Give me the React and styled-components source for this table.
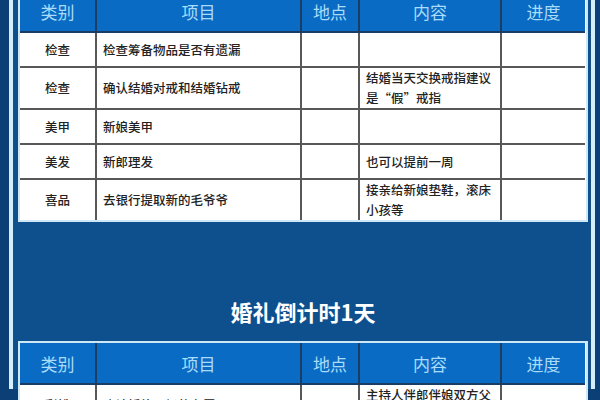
import React from "react";
import styled, { createGlobalStyle } from "styled-components";

const Global = createGlobalStyle`
  html, body { margin: 0; padding: 0; background: #0b3f75; }
  body { font-family: "Noto Sans CJK SC", "Noto Sans", sans-serif; }
`;

const Page = styled.div`
  width: 600px;
  height: 400px;
  overflow: hidden;
  background: #0b3f75;
  padding: 0 5px 0 9px;
  box-sizing: border-box;
`;

const Frame = styled.div`
  height: 100%;
  box-sizing: border-box;
  border-left: 4px solid #d4eefb;
  border-right: 4px solid #d4eefb;
  box-shadow: inset 1px 0 0 #1a4f86, inset -1px 0 0 #1a4f86;
  background: #0e508e;
  padding: 0 3px 0 5px;
`;

const Sheet = styled.div`
  margin-top: ${(p) => p.$top || 0}px;
  border: 2px solid #cfe8f8;
  background: #fff;
`;

const Table = styled.table`
  width: 565px;
  border-collapse: separate;
  border-spacing: 0;
  table-layout: fixed;
`;

const Head = styled.th`
  height: 40px;
  padding: 0;
  background: #0a6bc5;
  color: #a9dcf8;
  font-size: 17px;
  font-weight: 400;
  text-align: center;
  border-bottom: 2px solid #1c3d63;
  border-right: 2px solid #1c3d63;
  &:last-child { border-right: none; }
`;

const Cell = styled.td`
  height: 33px;
  padding: 0 ${(p) => (p.$center ? 0 : 6)}px;
  color: #222222;
  font-size: 12.5px;
  font-weight: 500;
  line-height: 20px;
  text-align: ${(p) => (p.$center ? "center" : "left")};
  vertical-align: middle;
  border-bottom: 2px solid #585858;
  border-right: 2px solid #585858;
  &:last-child { border-right: none; }
  tr:last-child > & { border-bottom: none; }
`;

const Title = styled.h2`
  margin: 74px 0 15px;
  height: 30px;
  line-height: 30px;
  text-align: center;
  color: #ffffff;
  font-size: 22px;
  font-weight: 700;
  font-family: "Noto Sans CJK SC", sans-serif;
`;

const widths = [77, 205, 58, 142, 83];
const heads = ["类别", "项目", "地点", "内容", "进度"];

const rows1 = [
  ["检查", "检查筹备物品是否有遗漏", "", "", ""],
  ["检查", "确认结婚对戒和结婚钻戒", "", "结婚当天交换戒指建议是“假”戒指", ""],
  ["美甲", "新娘美甲", "", "", ""],
  ["美发", "新郎理发", "", "也可以提前一周", ""],
  ["喜品", "去银行提取新的毛爷爷", "", "接亲给新娘垫鞋，滚床小孩等", ""],
];

const rows2 = [
  ["彩排", "确认婚礼现场的布置", "", "主持人伴郎伴娘双方父母参加", ""],
];

function Grid({ rows, top }) {
  return (
    <Sheet $top={top}>
      <Table>
        <colgroup>
          {widths.map((w, i) => (
            <col key={i} style={{ width: w }} />
          ))}
        </colgroup>
        <thead>
          <tr>
            {heads.map((h) => (
              <Head key={h}>{h}</Head>
            ))}
          </tr>
        </thead>
        <tbody>
          {rows.map((r, i) => (
            <tr key={i}>
              {r.map((c, j) => (
                <Cell key={j} $center={j === 0}>
                  {c}
                </Cell>
              ))}
            </tr>
          ))}
        </tbody>
      </Table>
    </Sheet>
  );
}

export default function App() {
  return (
    <Page>
      <Global />
      <Frame>
        <Grid rows={rows1} top={-11} />
        <Title>婚礼倒计时1天</Title>
        <Grid rows={rows2} top={0} />
      </Frame>
    </Page>
  );
}
